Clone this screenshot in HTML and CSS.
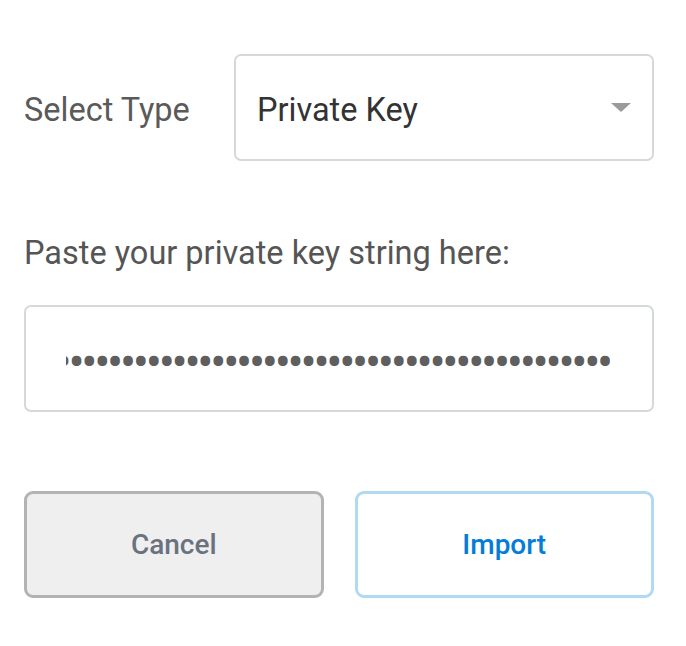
FILE: index.html
```html
<!DOCTYPE html>
<html>
<head>
  <title>Import account</title>
  <link rel="stylesheet" href="styles.css">
</head>
<body>
  <div class="page">
    <div class="type-row">
      <span class="type-label">Select Type</span>
      <div class="select">
        <span class="select-value">Private Key</span>
        <span class="caret"></span>
      </div>
    </div>

    <p class="key-label">Paste your private key string here:</p>
    <div class="key-box">
      <input class="key-input" type="password" value="0123456789abcdef0123456789abcdef0123456789abcdef0123456789abcdef">
    </div>

    <div class="actions">
      <button class="btn btn-cancel">Cancel</button>
      <button class="btn btn-import">Import</button>
    </div>
  </div>
</body>
</html>
```
FILE: styles.css
```css
body {
    margin: 0;
    background: #ffffff;
    font-family: Roboto, "Liberation Sans", sans-serif;
}

.page {
    padding: 54px 32px 0 24px;
}

.type-row {
    display: flex;
    align-items: center;
}

.type-label {
    width: 210px;
    font-size: 32.5px;
    color: #5a5a5a;
    padding-top: 4px;
}

.select {
    flex: 1;
    height: 107px;
    box-sizing: border-box;
    border: 2px solid #d6d9dc;
    border-radius: 7px;
    display: flex;
    align-items: center;
    justify-content: space-between;
    padding: 4px 21px 0 21px;
}

.select-value {
    font-size: 32.5px;
    color: #333333;
}

.caret {
    width: 0;
    height: 0;
    border-left: 10px solid transparent;
    border-right: 10px solid transparent;
    border-top: 9px solid #9b9b9b;
    margin-top: -4px;
}

.key-label {
    margin: 73px 0 32px 0;
    font-size: 32.5px;
    line-height: 39px;
    color: #555555;
}

.key-box {
    height: 107px;
    box-sizing: border-box;
    border: 2px solid #d6d9dc;
    border-radius: 7px;
    display: flex;
    align-items: center;
    padding: 8px 42px 0 40px;
}

.key-input {
    width: 100%;
    border: 0;
    outline: none;
    direction: rtl;
    font-family: Roboto, sans-serif;
    font-size: 48px;
    letter-spacing: -3.3px;
    line-height: 50px;
    color: #5f5f5f;
    padding: 0;
    background: transparent;
}

.actions {
    display: flex;
    gap: 31px;
    margin-top: 79px;
}

.btn {
    flex: 1;
    height: 107px;
    border-radius: 9px;
    font-family: Roboto, sans-serif;
    font-size: 28px;
    font-weight: 500;
}

.btn-cancel {
    background: #efefef;
    border: 3px solid #b3b3b3;
    color: #6a737d;
}

.btn-import {
    background: #ffffff;
    border: 3px solid #b0d9f2;
    color: #037dd6;
}
```
